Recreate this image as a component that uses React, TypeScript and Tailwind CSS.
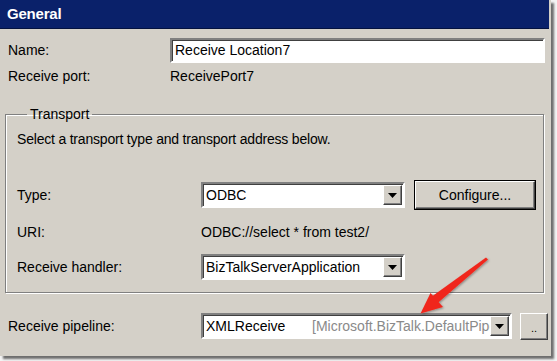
import React from 'react';

const font = { fontFamily: '"Liberation Sans", Arial, sans-serif' };

function DropButton() {
  return (
    <div className="w-[19px] h-full bg-[#d4d0c8] border border-t-white border-l-white border-r-[#404040] border-b-[#404040] shadow-[inset_-1px_-1px_0_#808080] flex items-center justify-center shrink-0">
      <svg width="9" height="5" viewBox="0 0 9 5"><path d="M0 0H9L4.5 5Z" fill="#000" /></svg>
    </div>
  );
}

function Combo({ width, children }: { width: string; children: React.ReactNode }) {
  return (
    <div className={`${width} h-[26px] shrink-0 flex bg-white border-2 border-t-[#808080] border-l-[#808080] border-r-white border-b-white shadow-[inset_1px_1px_0_#404040]`}>
      <div className="flex-1 min-w-0 flex items-center pl-[3px] overflow-hidden whitespace-nowrap">{children}</div>
      <div className="py-[1px] pr-[1px] h-full"><DropButton /></div>
    </div>
  );
}

function Row({ label, height, children, labelW }: { label: string; height: string; labelW: string; children: React.ReactNode }) {
  return (
    <div className={`flex items-center ${height}`}>
      <div className={`${labelW} shrink-0`}>{label}</div>
      {children}
    </div>
  );
}

export default function App() {
  return (
    <div className="w-[557px] h-[361px] bg-[#f4f4f4] relative overflow-hidden text-[14px] text-black" style={font}>
      <div className="w-[551px] h-[356px] bg-[#d4d0c8] shadow-[3px_3px_2px_rgba(0,0,0,0.55)] flex flex-col">
        {/* title bar */}
        <div className="h-[29px] bg-[#0a216a] border-b border-[#04123f] flex items-center pl-[7px] mr-[2px]">
          <span className="text-white font-bold text-[15px] tracking-[-0.2px]">General</span>
        </div>

        <div className="pl-[8px] pr-[6px] flex flex-col">
          <Row label="Name:" height="h-[24px] mt-[9px]" labelW="w-[162px]">
            <div className="w-[375px] h-[25px] bg-white border-2 border-t-[#808080] border-l-[#808080] border-r-white border-b-white shadow-[inset_1px_1px_0_#404040] flex items-center pl-[3px]">
              Receive Location7
            </div>
          </Row>
          <Row label="Receive port:" height="h-[26px] mt-[1px]" labelW="w-[162px]">
            <span>ReceivePort7</span>
          </Row>

          {/* Transport group */}
          <fieldset className="mt-[17px] ml-[-3px] w-[539px] h-[187px] border border-[#808080] shadow-[inset_1px_1px_0_white,1px_1px_0_white] pl-[11px] pr-0">
            <legend className="ml-[10px] px-[3px] leading-[16px]">Transport</legend>
            <div className="h-[24px] mt-[5px] flex items-center tracking-[-0.2px]">Select a transport type and transport address below.</div>
            <Row label="Type:" height="h-[28px] mt-[30px]" labelW="w-[184px]">
              <Combo width="w-[204px]">ODBC</Combo>
              <div className="ml-[9px] w-[122px] h-[30px] shrink-0 border border-black">
                <div className="w-full h-full bg-[#d4d0c8] border border-t-white border-l-white border-r-[#404040] border-b-[#404040] shadow-[inset_-1px_-1px_0_#808080] flex items-center justify-center">
                  Configure...
                </div>
              </div>
            </Row>
            <Row label="URI:" height="h-[22px] mt-[12px]" labelW="w-[184px]">
              <span>ODBC://select * from test2/</span>
            </Row>
            <Row label="Receive handler:" height="h-[26px] mt-[11px]" labelW="w-[184px]">
              <Combo width="w-[204px]">BizTalkServerApplication</Combo>
            </Row>
          </fieldset>

          <Row label="Receive pipeline:" height="h-[26px] mt-[20px]" labelW="w-[193px]">
            <Combo width="w-[311px]">
              <span className="w-[106px] shrink-0">XMLReceive</span>
              <span className="flex-1 min-w-0 overflow-hidden text-[#8a8a8a]">[Microsoft.BizTalk.DefaultPipelines.XMLReceive]</span>
            </Combo>
            <div className="ml-[8px] w-[28px] h-[27px] shrink-0 bg-[#d4d0c8] border border-t-white border-l-white border-r-[#404040] border-b-[#404040] shadow-[inset_-1px_-1px_0_#808080] flex items-center justify-center pt-[4px] text-[11px] leading-none">
              ..
            </div>
          </Row>
        </div>
      </div>

      {/* annotation arrow */}
      <svg className="absolute left-0 top-0 pointer-events-none" width="557" height="361" viewBox="0 0 557 361">
        <defs>
          <filter id="sh" x="-20%" y="-20%" width="140%" height="140%">
            <feDropShadow dx="1" dy="1" stdDeviation="1" floodColor="#000" floodOpacity="0.35" />
          </filter>
        </defs>
        <g filter="url(#sh)" fill="#f0281e">
          <path d="M486 257.4 L488 259.6 L438 302.8 L432.2 296.2 Z" />
          <path d="M420.5 313.5 L430.5 293 L443 307 Z" />
        </g>
      </svg>
    </div>
  );
}
